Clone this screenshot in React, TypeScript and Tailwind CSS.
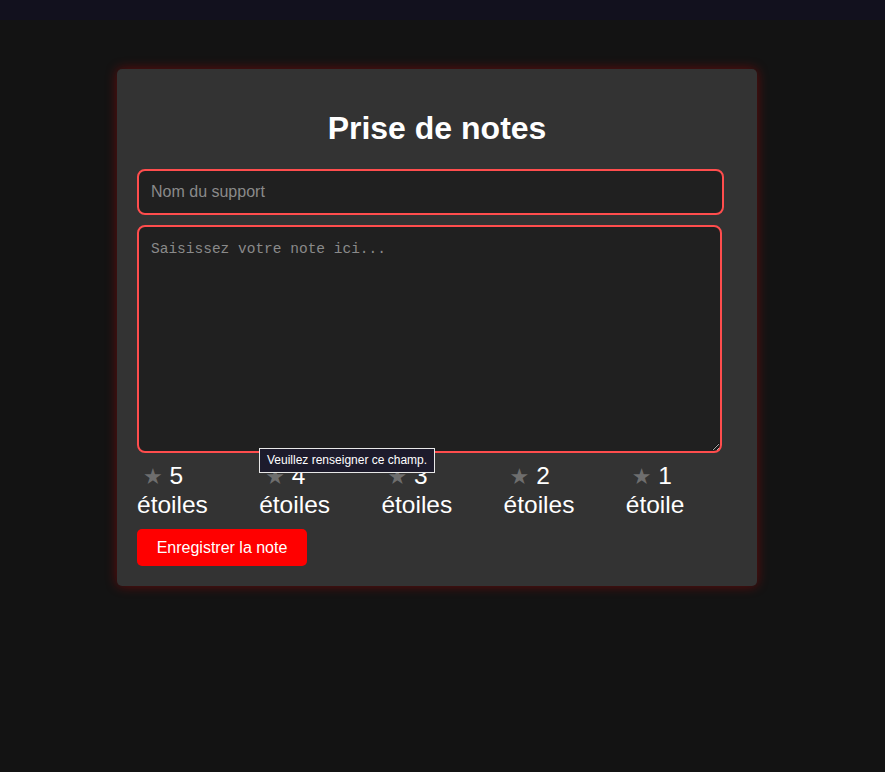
export default function App() {
  const ratings = [
    { value: 5, label: 'étoiles' },
    { value: 4, label: 'étoiles' },
    { value: 3, label: 'étoiles' },
    { value: 2, label: 'étoiles' },
    { value: 1, label: 'étoile' },
  ]

  return (
    <div className="min-h-[772px] bg-[#131313] font-['Liberation_Sans',Arial,sans-serif]">
      <div className="h-5 bg-[#12111e]" />

      <div className="pt-[49px] pl-[117px]">
        <form className="relative w-[640px] rounded-[5px] bg-[#333333] p-5 shadow-[0_0_12px_rgba(200,0,0,0.45)]">
          <h1 className="mt-[21px] mb-[22px] text-center text-[32px] font-bold leading-[37px] text-white">
            Prise de notes
          </h1>

          <input
            type="text"
            placeholder="Nom du support"
            className="block h-[46px] w-[587px] rounded-lg border-2 border-[#ff4d4d] bg-[#202020] px-3 text-base text-white outline-none placeholder:text-[#8a8a8a]"
          />

          <textarea
            placeholder="Saisissez votre note ici..."
            className="mt-[10px] block h-[228px] w-[585px] rounded-lg border-2 border-[#ff4d4d] bg-[#202020] px-3 py-[12px] font-['Liberation_Mono',monospace] text-[14.5px] text-white outline-none placeholder:text-[#8a8a8a]"
          />

          <div className="mt-[9px] grid w-[611px] grid-cols-5">
            {ratings.map((r) => (
              <label key={r.value} className="text-[24.5px] leading-[28px] text-white">
                <span className="ml-[6px] font-['DejaVu_Sans',sans-serif] text-[22px] text-[#6e6e6e]">★</span>{' '}
                {r.value}
                <br />
                {r.label}
              </label>
            ))}
          </div>

          <button
            type="button"
            className="mt-[10px] h-[37px] w-[170px] rounded-[5px] bg-[#ff0000] text-base text-white"
          >
            Enregistrer la note
          </button>

          <div className="absolute left-[142px] top-[379px] border border-[#e8e8e8] bg-[#1d1b2c] px-[7px] py-[4px] text-[12px] leading-[15px] text-white">
            Veuillez renseigner ce champ.
          </div>
        </form>
      </div>
    </div>
  )
}
